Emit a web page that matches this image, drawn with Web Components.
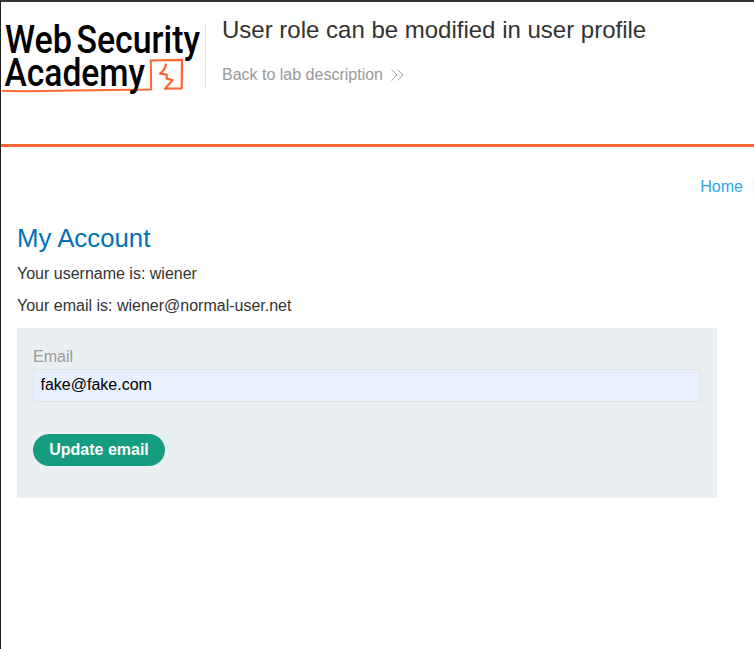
<!DOCTYPE html>
<html lang="en">
<head>
<meta charset="utf-8">
<title>User role can be modified in user profile</title>
<style>
html, body { margin: 0; height: 100%; }
body { font: 16px/20px "Liberation Sans", Arial, sans-serif; color: #333332; background: #fff; overflow: hidden; }
</style>
</head>
<body>
<lab-page>
  <lab-header slot="header">
    <academy-logo slot="logo"></academy-logo>
    <span slot="title">User role can be modified in user profile</span>
    <span slot="back">Back to lab description</span>
  </lab-header>
  <top-links>Home</top-links>
  <account-panel>
    <span slot="heading">My Account</span>
    <span slot="user">Your username is: wiener</span>
    <span slot="mail">Your email is: wiener@normal-user.net</span>
    <email-form></email-form>
  </account-panel>
</lab-page>
<script>
const define = (name, html) => customElements.define(name, class extends HTMLElement {
  constructor() {
    super();
    const t = document.createElement('template');
    t.innerHTML = html;
    this.attachShadow({ mode: 'open' }).append(t.content.cloneNode(true));
  }
});

define('lab-page', `
<style>
:host { display: block; box-sizing: border-box; height: 649px; border-top: 2px solid #39343c; border-left: 1px solid #222; overflow: hidden; }
</style>
<slot name="header"></slot><slot></slot>`);

define('lab-header', `
<style>
:host { display: flex; box-sizing: border-box; height: 145px; border-bottom: 3px solid #ff6633; }
.logo { width: 204px; flex: none; }
.text { border-left: 1px solid #e4e4e4; height: 63px; margin-top: 22px; padding-left: 16px; }
h2 { font-size: 24px; line-height: 28px; font-weight: 400; margin: -8px 0 0; white-space: nowrap; }
a { display: flex; align-items: center; color: #999; margin-top: 21px; }
svg { margin: -1px 0 0 8px; }
</style>
<div class="logo"><slot name="logo"></slot></div>
<div class="text">
  <h2><slot name="title"></slot></h2>
  <a><slot name="back"></slot><svg width="13" height="12" viewBox="0 0 13 12" fill="none" stroke="#a3a3a3"><path d="M.5 .5 6 6 .5 11.500M6.500 .5 12 6 6.500 11.500"/></svg></a>
</div>`);

define('academy-logo', `
<style>
:host, svg { display: block; }
svg { overflow: visible; }
text { font: 500 38px/1 Roboto, sans-serif; fill: #000; }
</style>
<svg width="204" height="98" viewBox="1 2 204 98">
  <g fill="none" stroke="#ff6633" stroke-linejoin="round">
    <path stroke-width="2" d="M2 90.700 25 91.200 90 90.200 151.200 89.600 150.800 60.200"/>
    <path stroke-width="2.200" d="M149.800 60.500 182 59.800 181.700 88.300 165 88.700 172.600 80 166.600 78.600 166.800 74.600 160 73.600 Q165.500 69.500 165.900 63.600"/>
  </g>
  <text x="5" y="52.700" textLength="67" lengthAdjust="spacingAndGlyphs">Web</text>
  <text x="76.500" y="52.700" textLength="123.500" lengthAdjust="spacingAndGlyphs">Security</text>
  <text x="4.500" y="85.500" textLength="140.500" lengthAdjust="spacingAndGlyphs">Academy</text>
</svg>`);

define('top-links', `
<style>
:host { display: flex; justify-content: flex-end; margin-top: 30px; color: #29a7df; height: 20px; }
i { width: 1px; height: 15px; margin: 3px 0 0 10px; background: #ffffbe; }
</style>
<slot></slot><i></i>`);

define('account-panel', `
<style>
:host { display: block; margin: 24px 37px 0 16px; }
h1 { font-size: 25.800px; line-height: 34px; font-weight: 400; color: #0071bc; margin: 0; }
p { margin: 9px 0 12px; }
p + p { margin: 12px 0; }
</style>
<h1><slot name="heading"></slot></h1>
<p><slot name="user"></slot></p>
<p><slot name="mail"></slot></p>
<slot></slot>`);

define('email-form', `
<style>
:host { display: block; box-sizing: border-box; height: 170px; padding: 19px 16px; background: #eaeff2; }
label { display: block; color: #999; height: 22px; }
input { display: block; box-sizing: border-box; width: 100%; height: 33px; border: 1px solid #e2e4ea; background: #e8effd; color: #000; font: inherit; padding: 0 6.500px 2px; outline: none; }
button { display: block; box-sizing: border-box; width: 132px; height: 32px; margin-top: 32px; border: 0; padding: 0; border-radius: 16px; background: #169c80; color: #fff; font: inherit; font-weight: 700; }
</style>
<label>Email</label>
<input type="text" value="fake@fake.com">
<button>Update email</button>`);
</script>
</body>
</html>
